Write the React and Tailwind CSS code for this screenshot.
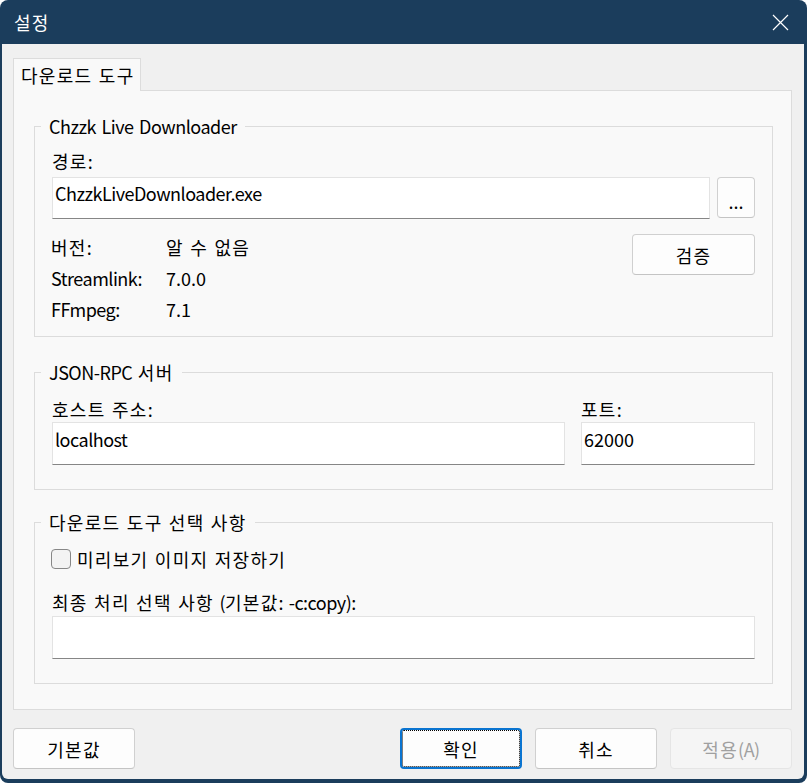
import React from "react";

const FONT = "font-['Noto_Sans_CJK_KR','Noto_Sans',sans-serif]";

const KO = /([\uAC00-\uD7A3]+(?:\s+[\uAC00-\uD7A3]+)*)/;

function T({ children }) {
  const s = String(children ?? "");
  const parts = s.split(KO).filter((p) => p !== "");
  return (
    <>
      {parts.map((p, i) =>
        /[\uAC00-\uD7A3]/.test(p) ? (
          <span key={i} className="tracking-[1.3px] [word-spacing:1px]">{p}</span>
        ) : /^[0-9.\s]+$/.test(p) ? (
          <span key={i}>{p}</span>
        ) : (
          <span key={i} className="tracking-[-0.5px] [word-spacing:2px]">{p}</span>
        )
      )}
    </>
  );
}

function Input({ value, className = "" }) {
  return (
    <div
      className={`bg-white border border-[#e3e3e3] border-b-[#868686] px-[2px] pt-[3px] leading-[24px] text-black ${className}`}
    >
      <T>{value}</T>
    </div>
  );
}

function Btn({ children, className = "" }) {
  return (
    <div
      className={`flex items-center justify-center rounded-[4px] border border-[#d0d0d0] border-b-[#c4c4c4] bg-[#fdfdfd] leading-[24px] ${className}`}
    >
      <T>{children}</T>
    </div>
  );
}

function Group({ title, children, className = "" }) {
  return (
    <fieldset className={`border border-[#dcdcdc] px-[17px] ${className}`}>
      <legend className="-ml-[11px] px-[8px] leading-[24px]">
        <T>{title}</T>
      </legend>
      {children}
    </fieldset>
  );
}

function L({ children, className = "" }) {
  return (
    <div className={`leading-[24px] ${className}`}>
      <T>{children}</T>
    </div>
  );
}

export default function App() {
  return (
    <div className={`w-[807px] h-[783px] bg-white ${FONT} text-[18px] text-black`}>
      <div className="flex h-full flex-col rounded-[8px] bg-[#1b3d5c] pl-[2px] pr-[3px] pb-[4px]">
        {/* Title bar */}
        <div className="flex h-[44px] items-center justify-between pl-[12px] pr-[15px] text-white">
          <span className="leading-[24px]">
            <T>설정</T>
          </span>
          <svg width="17" height="17" viewBox="0 0 17 17" className="mt-[1px]">
            <path d="M1 1 L16 16 M16 1 L1 16" stroke="#ffffff" strokeWidth="1.2" fill="none" />
          </svg>
        </div>

        {/* Body */}
        <div className="flex flex-1 flex-col rounded-b-[6px] bg-[#f0f0f0] pl-[11px] pr-[12px] pt-[14px] pb-[10px]">
          {/* Tab strip */}
          <div className="flex">
            <div className="relative z-10 -mb-px h-[33px] w-[128px] border border-b-0 border-[#dcdcdc] bg-[#f9f9f9] pl-[7px] pt-[4px] leading-[24px]">
              <T>다운로드 도구</T>
            </div>
          </div>

          {/* Tab panel */}
          <div className="flex-1 border border-[#dcdcdc] bg-[#f9f9f9] pl-[20px] pr-[18px] pt-[23px]">
            <Group title="Chzzk Live Downloader">
              <L className="mt-[11px]">경로:</L>
              <div className="mt-[4px] flex items-start gap-[7px]">
                <Input value="ChzzkLiveDownloader.exe" className="h-[42px] flex-1" />
                <Btn className="h-[41px] w-[38px] pt-[6px]">...</Btn>
              </div>
              <div className="mt-[15px] flex items-start justify-between pb-[15px]">
                <div className="grid grid-cols-[114px_auto] gap-y-[7px] pt-[1px] leading-[24px]">
                  <L className="-ml-px">버전:</L>
                  <L>알 수 없음</L>
                  <L className="-ml-px">Streamlink:</L>
                  <L>7.0.0</L>
                  <L className="-ml-px">FFmpeg:</L>
                  <L>7.1</L>
                </div>
                <Btn className="h-[41px] w-[123px]">검증</Btn>
              </div>
            </Group>

            <Group title="JSON-RPC 서버" className="mt-[23px] pb-[24px]">
              <div className="mt-[13px] grid grid-cols-[1fr_174px] gap-x-[16px]">
                <L>호스트 주소:</L>
                <L>포트:</L>
                <Input value="localhost" className="mt-[1px] h-[43px] !pt-[4px]" />
                <Input value="62000" className="mt-[1px] h-[43px] !pt-[4px]" />
              </div>
            </Group>

            <Group title="다운로드 도구 선택 사항" className="mt-[20px] pb-[24px]">
              <div className="mt-[13px] flex items-center gap-[6px] leading-[24px]">
                <div className="-ml-px h-[20px] w-[20px] rounded-[4px] border border-[#878787] bg-[#f3f3f3]" />
                <span>
                  <T>미리보기 이미지 저장하기</T>
                </span>
              </div>
              <L className="mt-[19px]">최종 처리 선택 사항 (기본값: -c:copy):</L>
              <Input value="" className="mt-[2px] h-[43px]" />
            </Group>
          </div>

          {/* Bottom buttons */}
          <div className="mt-[18px] flex h-[41px] items-stretch">
            <Btn className="w-[122px]">기본값</Btn>
            <div className="flex-1" />
            <div className="flex gap-[13px]">
              <Btn className="w-[122px] border-2 !border-[#0a74d0] outline-1 outline-dotted outline-black -outline-offset-3">
                확인
              </Btn>
              <Btn className="w-[122px]">취소</Btn>
              <div className="flex w-[122px] items-center justify-center rounded-[4px] border border-[#e5e5e5] bg-[#f5f5f5] leading-[24px] text-[#a0a0a0]">
                <T>적용(A)</T>
              </div>
            </div>
          </div>
        </div>
      </div>
    </div>
  );
}
